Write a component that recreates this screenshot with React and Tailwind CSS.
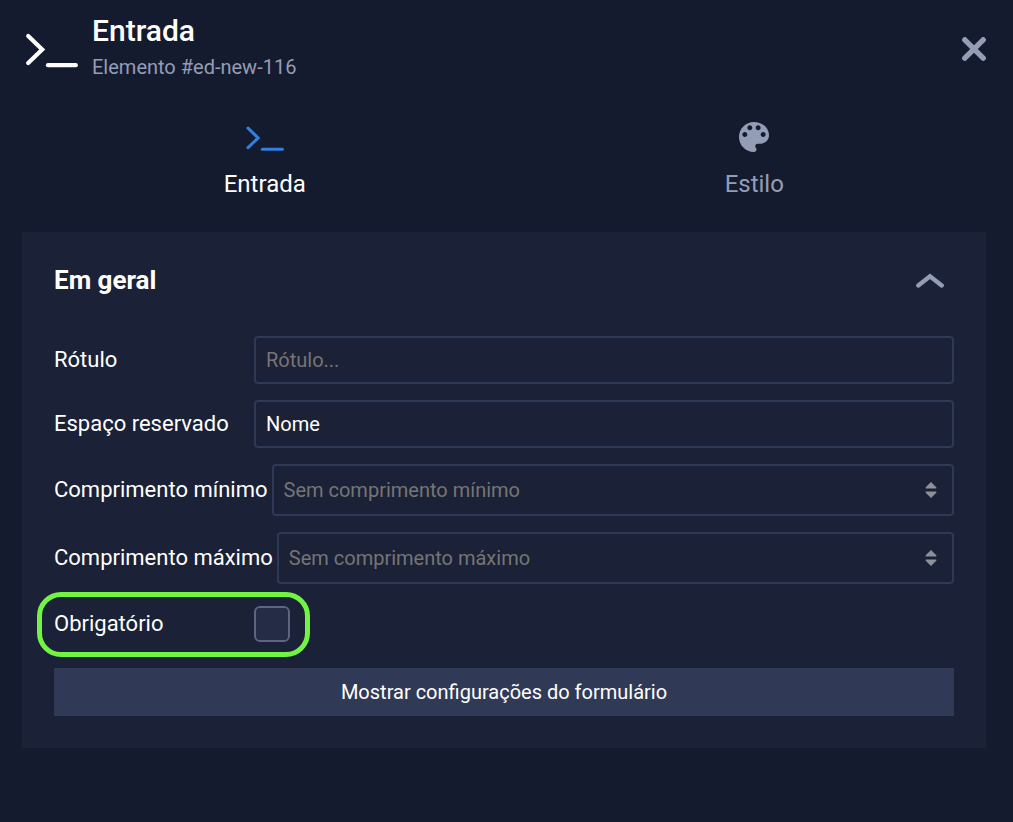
import { useState } from "react"

function PromptIcon({ className }) {
  return (
    <svg
      viewBox="0 0 54 36"
      className={className}
      fill="none"
      stroke="currentColor"
      strokeWidth="4.2"
      strokeLinecap="round"
      strokeLinejoin="miter"
      aria-hidden="true"
    >
      <path d="M4.2 3 L18.2 16.5 L4.2 30" />
      <path d="M24 32.2 H51.8" />
    </svg>
  )
}

function PaletteIcon({ className }) {
  return (
    <svg viewBox="3 3 18 18" className={className} fill="currentColor" aria-hidden="true">
      <path d="M12 3c-4.97 0-9 4.03-9 9s4.03 9 9 9c.83 0 1.5-.67 1.5-1.5 0-.39-.15-.74-.39-1.01-.23-.26-.38-.61-.38-.99 0-.83.67-1.5 1.5-1.5H16c2.76 0 5-2.24 5-5 0-4.42-4.03-8-9-8zm-5.5 9c-.83 0-1.5-.67-1.5-1.5S5.67 9 6.5 9 8 9.67 8 10.5 7.33 12 6.5 12zm3-4C8.67 8 8 7.33 8 6.5S8.67 5 9.5 5s1.5.67 1.5 1.5S10.33 8 9.5 8zm5 0c-.83 0-1.5-.67-1.5-1.5S13.67 5 14.5 5s1.5.67 1.5 1.5S15.33 8 14.5 8zm3 4c-.83 0-1.5-.67-1.5-1.5S16.67 9 17.5 9s1.5.67 1.5 1.5-.67 1.5-1.5 1.5z" />
    </svg>
  )
}

function Tab({ active, label, onClick, children }) {
  return (
    <button
      type="button"
      role="tab"
      aria-selected={active}
      onClick={onClick}
      className={`flex flex-1 flex-col items-center gap-3 text-2xl ${
        active ? "text-white" : "text-[#949db6]"
      }`}
    >
      <span className="flex h-9 items-center">{children}</span>
      {label}
    </button>
  )
}

function Field({ id, label, children }) {
  return (
    <div className="flex items-center">
      <label htmlFor={id} className="min-w-50 shrink-0 pr-1 whitespace-nowrap">
        {label}
      </label>
      {children}
    </div>
  )
}

const inputClass =
  "w-full min-w-0 flex-1 rounded border-2 border-[#2e3956] bg-transparent px-2.5 text-xl text-white outline-none placeholder:text-[#757575]"

function NumberInput({ id, placeholder }) {
  return (
    <div className="relative flex min-w-0 flex-1">
      <input
        id={id}
        type="number"
        placeholder={placeholder}
        className={`${inputClass} h-13 [appearance:textfield]`}
      />
      <svg
        viewBox="0 0 12 16"
        className="pointer-events-none absolute top-1/2 right-[17px] h-4 w-3 -translate-y-1/2"
        fill="#8d8f99"
        aria-hidden="true"
      >
        <path d="M6 0 L11.3 5.3 V6.6 H0.7 V5.3 Z" />
        <path d="M6 16 L11.3 10.7 V9.4 H0.7 V10.7 Z" />
      </svg>
    </div>
  )
}

export default function App() {
  const [tab, setTab] = useState("input")
  const [open, setOpen] = useState(true)
  const [placeholder, setPlaceholder] = useState("Nome")

  return (
    <div className="min-h-screen bg-[#151b2e] font-[Roboto,sans-serif] text-white">
      {/* Header */}
      <header className="flex items-center pt-[13px] pr-[27px] pl-6">
        <PromptIcon className="mt-1 h-9 w-[54px]" />
        <div className="ml-3.5 flex-1">
          <h1 className="text-3xl leading-9 font-medium">Entrada</h1>
          <p className="text-xl leading-9 text-[#949db6]">Elemento #ed-new-116</p>
        </div>
        <button type="button" aria-label="Fechar" className="text-[#949db6]">
          <svg viewBox="0 0 24 24" className="h-6 w-6" stroke="currentColor" strokeWidth="5.4" strokeLinecap="round">
            <path d="M2.8 2.8 L21.2 21.2 M21.2 2.8 L2.8 21.2" />
          </svg>
        </button>
      </header>

      {/* Tabs */}
      <div role="tablist" className="flex pt-[35px] pr-3.5 pl-5">
        <Tab active={tab === "input"} label="Entrada" onClick={() => setTab("input")}>
          <PromptIcon className="mt-0.5 h-[26px] w-[39px] text-[#2f80e0]" />
        </Tab>
        <Tab active={tab === "style"} label="Estilo" onClick={() => setTab("style")}>
          <PaletteIcon className="mb-0.5 h-[30px] w-[30px]" />
        </Tab>
      </div>

      {/* General settings */}
      <section className="mt-8 mr-[27px] ml-[22px] bg-[#1b2136] p-8">
        <div className="flex items-center justify-between pr-2.5">
          <h2 className="text-[26px] leading-8 font-bold">Em geral</h2>
          <button
            type="button"
            aria-label="Em geral"
            aria-expanded={open}
            onClick={() => setOpen(!open)}
            className="text-[#949db6]"
          >
            <svg viewBox="0 0 28 16" className="h-4 w-7" fill="none" stroke="currentColor" strokeWidth="4.4" strokeLinecap="round">
              <path d="M2.3 13.5 L14 4.3 L25.7 13.5" />
            </svg>
          </button>
        </div>

        {open && (
          <form className="mt-10 flex flex-col gap-4 text-[22px] leading-8">
            <Field id="label" label="Rótulo">
              <input id="label" type="text" placeholder="Rótulo..." className={`${inputClass} h-12`} />
            </Field>
            <Field id="placeholder" label="Espaço reservado">
              <input
                id="placeholder"
                type="text"
                value={placeholder}
                onChange={(e) => setPlaceholder(e.target.value)}
                className={`${inputClass} h-12`}
              />
            </Field>
            <Field id="min" label="Comprimento mínimo">
              <NumberInput id="min" placeholder="Sem comprimento mínimo" />
            </Field>
            <Field id="max" label="Comprimento máximo">
              <NumberInput id="max" placeholder="Sem comprimento máximo" />
            </Field>
            <div className="relative flex h-12 w-fit items-center">
              <Field id="required" label="Obrigatório">
                <input
                  id="required"
                  type="checkbox"
                  className="h-9 w-9 appearance-none rounded-md border-2 border-[#5d6481] bg-[#252c45] checked:bg-[#2f80e0]"
                />
              </Field>
              {/* Highlight around the required option */}
              <div className="pointer-events-none absolute -top-2 -right-5 -bottom-[9px] -left-[17px] rounded-3xl border-5 border-[#72f542]" />
            </div>
            <button type="button" className="mt-1 h-12 bg-[#303a56] text-xl">
              Mostrar configurações do formulário
            </button>
          </form>
        )}
      </section>
    </div>
  )
}
